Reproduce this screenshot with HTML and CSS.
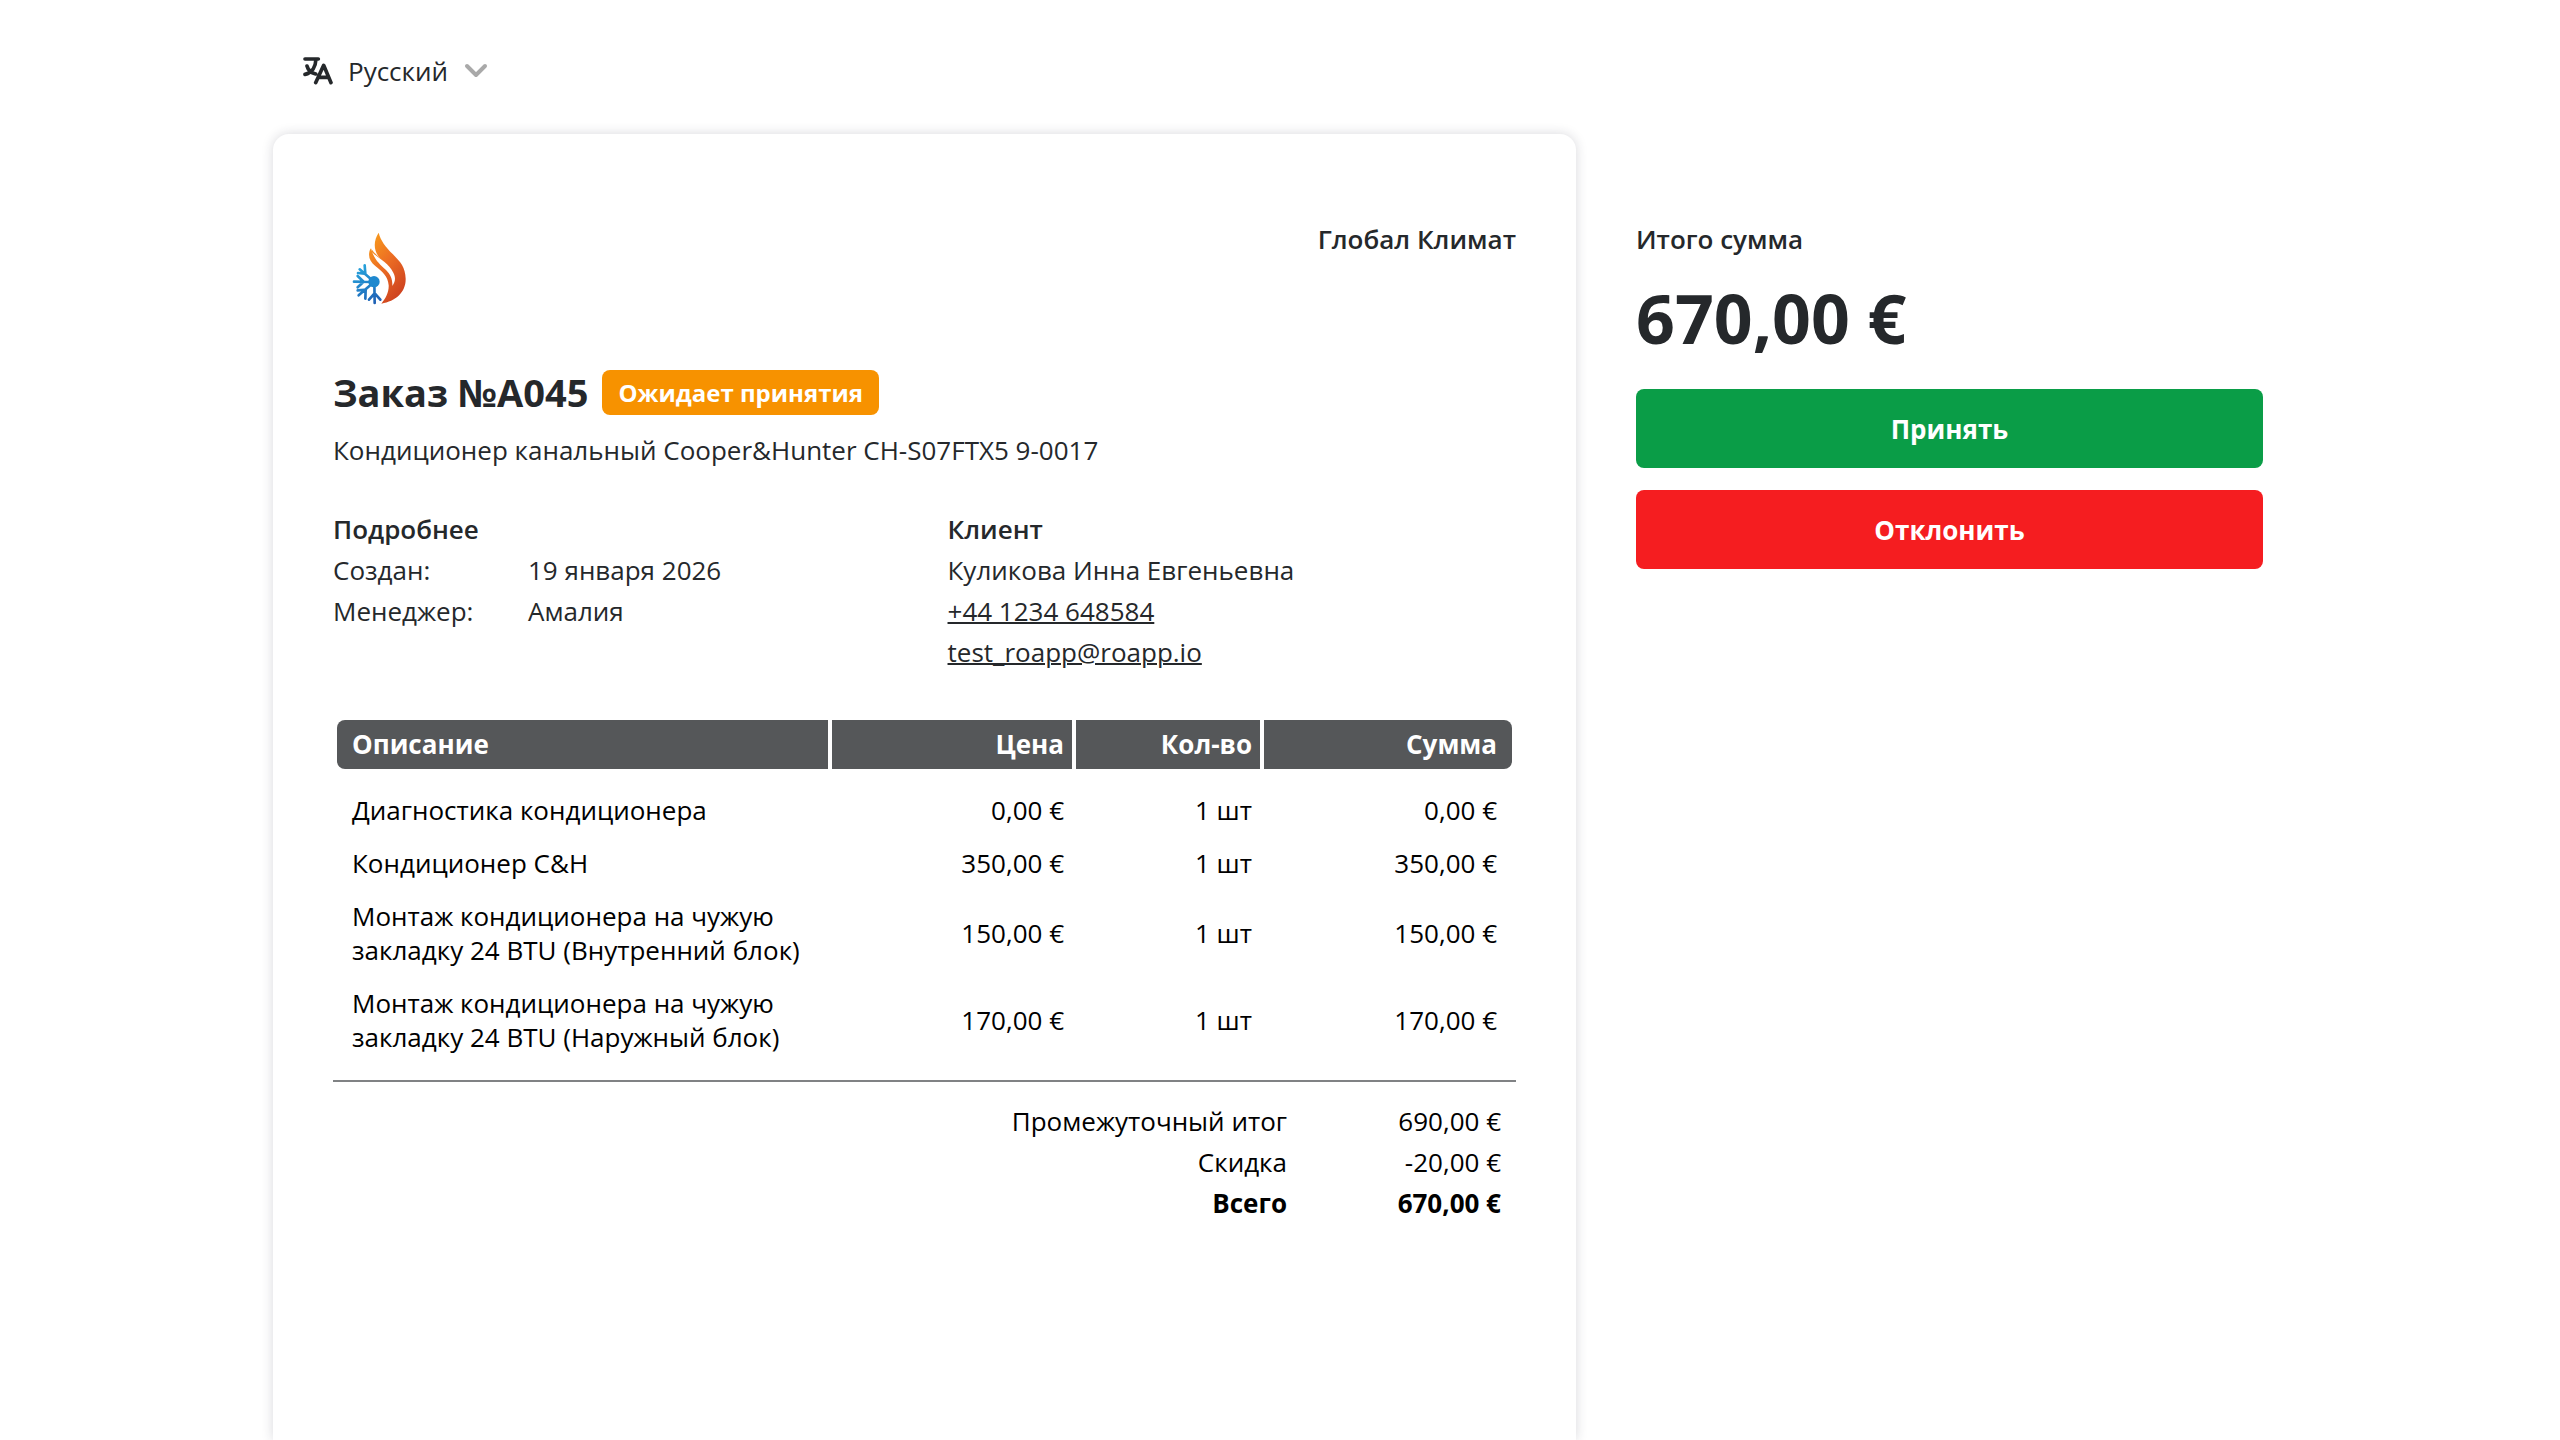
FILE: index.html
```html
<!DOCTYPE html>
<html lang="ru">
<head>
  <meta charset="UTF-8" />
  <meta name="viewport" content="width=device-width, initial-scale=1.0"/>
  <title>Заказ №A045</title>
  <link rel="stylesheet" href="styles.css">
</head>
<body>
  <div class="page">
    <header class="lang">
      <label for="lang" aria-label="Язык">
        <svg class="lang-icon" viewBox="0 0 90 84" fill="none" stroke="#25282b" stroke-width="11" stroke-linecap="round" stroke-linejoin="round">
          <path d="M6 6H46M39 6C38 28 28 48 6 52M12 27C15 38 25 48 38 51M38 77L62 25L84 77M46 61H77"/>
        </svg>
      </label>
      <select id="lang">
        <option>Русский</option>
      </select>
      <svg class="chevron" viewBox="0 0 24 16" fill="none" stroke="#a9a9a9" stroke-width="4" stroke-linecap="round" stroke-linejoin="round">
        <path d="M3 3L12 12L21 3"/>
      </svg>
    </header>

    <div class="layout">
      <main class="card">
        <div class="card-top">
          <svg class="logo" viewBox="66 66 165 219" role="img" aria-label="Глобал Климат">
            <defs>
              <linearGradient id="fire" x1="0" y1="0" x2="0.6" y2="1">
                <stop offset="0" stop-color="#f9a21b"/>
                <stop offset="0.5" stop-color="#ed6f23"/>
                <stop offset="1" stop-color="#cf4420"/>
              </linearGradient>
              <linearGradient id="ice" gradientUnits="userSpaceOnUse" x1="80" y1="170" x2="140" y2="280">
                <stop offset="0" stop-color="#27a5dd"/>
                <stop offset="1" stop-color="#1f5fb4"/>
              </linearGradient>
            </defs>
            <path fill="url(#fire)" d="M146 68C130 92 130 122 148 142C166 161 192 180 194 204C195 212 193 220 190 228C202 202 192 180 172 162C152 146 134 132 122 114C112 136 118 154 136 168C156 184 174 198 176 226C177 246 168 264 154 281C198 274 228 246 227 206C226 172 212 156 188 132C166 110 152 92 146 68Z"/>
            <path fill="#fff" d="M123 113C116 100 118 112 128 128C148 148 176 158 190 188C197 202 197 214 187 228C188 208 182 194 168 180C148 162 130 146 123 113Z"/>
            <g stroke="url(#ice)" stroke-width="8" stroke-linecap="round" fill="none">
              <path d="M132 215L89 178M104 166L106 191L84 189M132 216L72 215M83 198L101 215L83 232M132 216L86 256M83 241L107 239L106 266M133 216L134 279M117 269L134 250L151 269"/>
            </g>
            <circle cx="132" cy="215" r="17" fill="#1e88cf"/>
          </svg>
          <strong class="company">Глобал Климат</strong>
        </div>

        <div class="title">
          <h1>Заказ №A045</h1>
          <span class="badge">Ожидает принятия</span>
        </div>
        <p class="subject">Кондиционер канальный Cooper&amp;Hunter CH-S07FTX5 9-0017</p>

        <div class="info">
          <section>
            <h2>Подробнее</h2>
            <dl>
              <dt>Создан:</dt><dd>19 января 2026</dd>
              <dt>Менеджер:</dt><dd>Амалия</dd>
            </dl>
          </section>
          <section>
            <h2>Клиент</h2>
            <p>Куликова Инна Евгеньевна</p>
            <p><a href="tel:+441234648584">+44 1234 648584</a></p>
            <p><a href="mailto:test_roapp@roapp.io">test_roapp@roapp.io</a></p>
          </section>
        </div>

        <table class="items">
          <thead>
            <tr><th class="name">Описание</th><th class="price">Цена</th><th class="qty">Кол-во</th><th class="sum">Сумма</th></tr>
          </thead>
          <tbody>
            <tr class="spacer"></tr>
            <tr><td>Диагностика кондиционера</td><td>0,00 €</td><td>1 шт</td><td>0,00 €</td></tr>
            <tr><td>Кондиционер C&amp;H</td><td>350,00 €</td><td>1 шт</td><td>350,00 €</td></tr>
            <tr><td>Монтаж кондиционера на чужую закладку 24 BTU (Внутренний блок)</td><td>150,00 €</td><td>1 шт</td><td>150,00 €</td></tr>
            <tr><td>Монтаж кондиционера на чужую закладку 24 BTU (Наружный блок)</td><td>170,00 €</td><td>1 шт</td><td>170,00 €</td></tr>
          </tbody>
        </table>

        <table class="totals">
          <tr><th>Промежуточный итог</th><td>690,00 €</td></tr>
          <tr><th>Скидка</th><td>-20,00 €</td></tr>
          <tr class="grand"><th>Всего</th><td>670,00 €</td></tr>
        </table>
      </main>

      <aside class="side">
        <h2>Итого сумма</h2>
        <p class="amount">670,00 €</p>
        <button type="button" class="accept">Принять</button>
        <button type="button" class="decline">Отклонить</button>
      </aside>
    </div>
  </div>
</body>
</html>
```
FILE: styles.css
```css
* {
  box-sizing: border-box;
}
body {
  margin: 0;
  padding-right: 24px;
  background-color: #fff;
  color: #25282b;
  font-family: "Open Sans", "Noto Sans", sans-serif;
  font-size: 26px;
  line-height: 41px;
}
h1, h2, p, dl, dd {
  margin: 0;
}
h2 {
  font-size: 26px;
  font-weight: 600;
}
a {
  color: inherit;
  text-decoration-thickness: 2px;
}
.page {
  display: flex;
  flex-direction: column;
  max-width: 1990px;
  min-height: 100vh;
  margin: 0 auto;
}
.lang {
  display: flex;
  align-items: center;
  gap: 15px;
  height: 134px;
  padding: 8px 0 0 30px;
}
.lang label {
  display: flex;
}
.lang-icon {
  width: 30px;
  height: 28px;
}
.lang select {
  appearance: none;
  padding: 0;
  border: none;
  background: none;
  color: inherit;
  font: inherit;
}
.chevron {
  width: 24px;
  height: 16px;
}
.layout {
  display: grid;
  grid-template-columns: 1303fr 627fr;
  gap: 60px;
  flex: 1;
}
.card {
  padding: 85px 60px 60px;
  border-radius: 16px 16px 0 0;
  box-shadow: 0 0 12px rgba(40,40,60,0.18);
}
.card-top {
  display: flex;
  justify-content: space-between;
  align-items: flex-start;
  height: 145px;
}
.logo {
  width: 55px;
  height: 73px;
  margin: 13px 0 0 19px;
}
.company {
  font-weight: 600;
}
.title {
  display: flex;
  align-items: center;
  gap: 14px;
  height: 56px;
}
.title h1 {
  font-size: 38px;
  line-height: 56px;
}
.badge {
  padding: 0 16px;
  border-radius: 8px;
  background-color: #f79200;
  color: #fff;
  font-size: 24px;
  font-weight: bold;
  line-height: 45px;
}
.subject {
  margin: 10px 0 38px;
}
.info {
  display: grid;
  grid-template-columns: 614fr 568fr;
  margin-bottom: 43px;
}
.info dl {
  display: grid;
  grid-template-columns: 195px 1fr;
}
.items {
  width: 100%;
  border-spacing: 4px 4px;
  border-bottom: 2px solid #808284;
  padding-bottom: 15px;
  color: #000;
  line-height: 34px;
  text-align: right;
  table-layout: fixed;
}
.items th {
  padding: 7px 8px 8px;
  background-color: #555759;
  color: #fff;
  font-weight: bold;
}
.items td {
  padding: 8px 8px 7px;
}
.items th:first-child, .items td:first-child {
  padding-left: 15px;
  text-align: left;
}
.items th:last-child, .items td:last-child {
  padding-right: 15px;
}
.items th:first-child {
  border-radius: 8px 0 0 8px;
}
.items th:last-child {
  border-radius: 0 8px 8px 0;
}
.items .spacer {
  height: 8px;
}
.name {
  width: 491px;
}
.price {
  width: 240px;
}
.qty {
  width: 184px;
}
.totals {
  width: 100%;
  margin-top: 19px;
  border-collapse: collapse;
  color: #000;
  text-align: right;
}
.totals th {
  padding: 0;
  font-weight: normal;
}
.totals td {
  width: 229px;
  padding: 0 15px 0 0;
}
.totals .grand th, .totals .grand td {
  font-weight: bold;
}
.side {
  padding-top: 85px;
}
.amount {
  margin: 13px 0 26px;
  font-size: 68px;
  font-weight: bold;
  line-height: 90px;
}
.side button {
  display: block;
  width: 100%;
  height: 79px;
  margin-bottom: 22px;
  border: none;
  border-radius: 8px;
  color: #fff;
  font: bold 26px "Open Sans", "Noto Sans", sans-serif;
  cursor: pointer;
}
.accept {
  background-color: #0a9d47;
}
.decline {
  background-color: #f51d20;
}
```
